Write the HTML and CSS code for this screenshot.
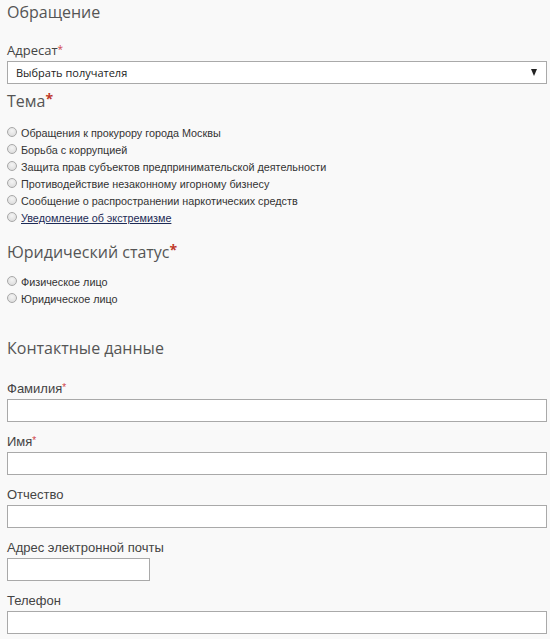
FILE: index.html
```html
<!DOCTYPE html>
<html lang="ru">
<head>
<meta charset="utf-8">
<title>Обращение</title>
<link rel="stylesheet" href="styles.css">
</head>
<body>
<form class="form">
  <h2 class="title title-first">Обращение</h2>

  <div class="field field-addr">
    <label class="label label-os">Адресат<span class="req">*</span></label>
    <div class="select">
      <span class="select-text">Выбрать получателя</span>
      <span class="select-arrow"></span>
    </div>
  </div>

  <h2 class="title title-tema">Тема<span class="req req-big">*</span></h2>
  <ul class="radios">
    <li class="radio"><span class="dot"></span>Обращения к прокурору города Москвы</li>
    <li class="radio"><span class="dot"></span>Борьба с коррупцией</li>
    <li class="radio"><span class="dot"></span>Защита прав субъектов предпринимательской деятельности</li>
    <li class="radio"><span class="dot"></span>Противодействие незаконному игорному бизнесу</li>
    <li class="radio"><span class="dot"></span>Сообщение о распространении наркотических средств</li>
    <li class="radio"><span class="dot"></span><a class="link" href="#">Уведомление об экстремизме</a></li>
  </ul>

  <h2 class="title title-status">Юридический статус<span class="req req-big">*</span></h2>
  <ul class="radios radios-status">
    <li class="radio"><span class="dot"></span>Физическое лицо</li>
    <li class="radio"><span class="dot"></span>Юридическое лицо</li>
  </ul>

  <h2 class="title title-contacts">Контактные данные</h2>

  <div class="field">
    <label class="label">Фамилия<span class="req">*</span></label>
    <div class="input"></div>
  </div>
  <div class="field">
    <label class="label">Имя<span class="req">*</span></label>
    <div class="input"></div>
  </div>
  <div class="field">
    <label class="label">Отчество</label>
    <div class="input"></div>
  </div>
  <div class="field">
    <label class="label">Адрес электронной почты</label>
    <div class="input input-short"></div>
  </div>
  <div class="field">
    <label class="label">Телефон</label>
    <div class="input"></div>
  </div>
</form>
</body>
</html>
```
FILE: styles.css
```css
html, body {
  margin: 0;
  padding: 0;
  background: #f9f9f9;
}
body {
  font-family: "Liberation Sans", Arial, sans-serif;
  color: #333;
}
.form {
  padding: 0 3px 0 7px;
  width: 540px;
}
.title {
  margin: 0;
  font-family: "Open Sans", sans-serif;
  font-weight: 400;
  font-size: 16px;
  line-height: 24px;
  color: #555;
}
.title-first { padding-top: 0; }
.title-tema { margin-top: 5px; }
.title-status { margin-top: 14px; }
.title-contacts { margin-top: 29px; margin-bottom: 21px; }
.field-addr { margin-top: 18px; }
.req {
  color: #d0454a;
  font-size: 10px;
  vertical-align: top;
  position: relative;
  top: -1px;
}
.req-big {
  color: #c0392b;
  font-size: 14px;
  top: -2px;
  font-weight: 700;
}
.label {
  display: block;
  font-size: 13px;
  line-height: 16px;
  color: #444;
  margin-bottom: 2px;
}
.label-os {
  font-family: "Open Sans", sans-serif;
  font-size: 13px;
  margin-bottom: 3px;
}
.field { margin-bottom: 12px; }
.field-addr { margin-bottom: 3px; }
.input {
  box-sizing: border-box;
  height: 23px;
  width: 540px;
  background: #fff;
  border: 1px solid #a9a9a9;
}
.input-short { width: 143px; }
.select {
  box-sizing: border-box;
  height: 23px;
  width: 540px;
  background: #fff;
  border: 1px solid #a9a9a9;
  display: flex;
  align-items: center;
  justify-content: space-between;
  padding: 0 9px 0 8px;
}
.select-text {
  font-family: "Open Sans", sans-serif;
  font-size: 11px;
  color: #222;
}
.select-arrow {
  width: 0;
  height: 0;
  border-left: 3.5px solid transparent;
  border-right: 3.5px solid transparent;
  border-top: 7px solid #222;
}
.radios {
  list-style: none;
  margin: 11px 0 0;
  padding: 0;
}
.radios-status { margin-top: 9px; }
.radio {
  display: flex;
  align-items: center;
  height: 17px;
  font-size: 10.8px;
  color: #333;
}
.dot {
  box-sizing: border-box;
  width: 10px;
  height: 10px;
  border-radius: 50%;
  border: 1px solid #a8a8a8;
  background: radial-gradient(circle at 50% 35%, #f4f4f4 0%, #d8d8d8 100%);
  margin-right: 4px;
  margin-top: -2px;
}
.link {
  color: #1d2b56;
  text-decoration: underline;
}
```
